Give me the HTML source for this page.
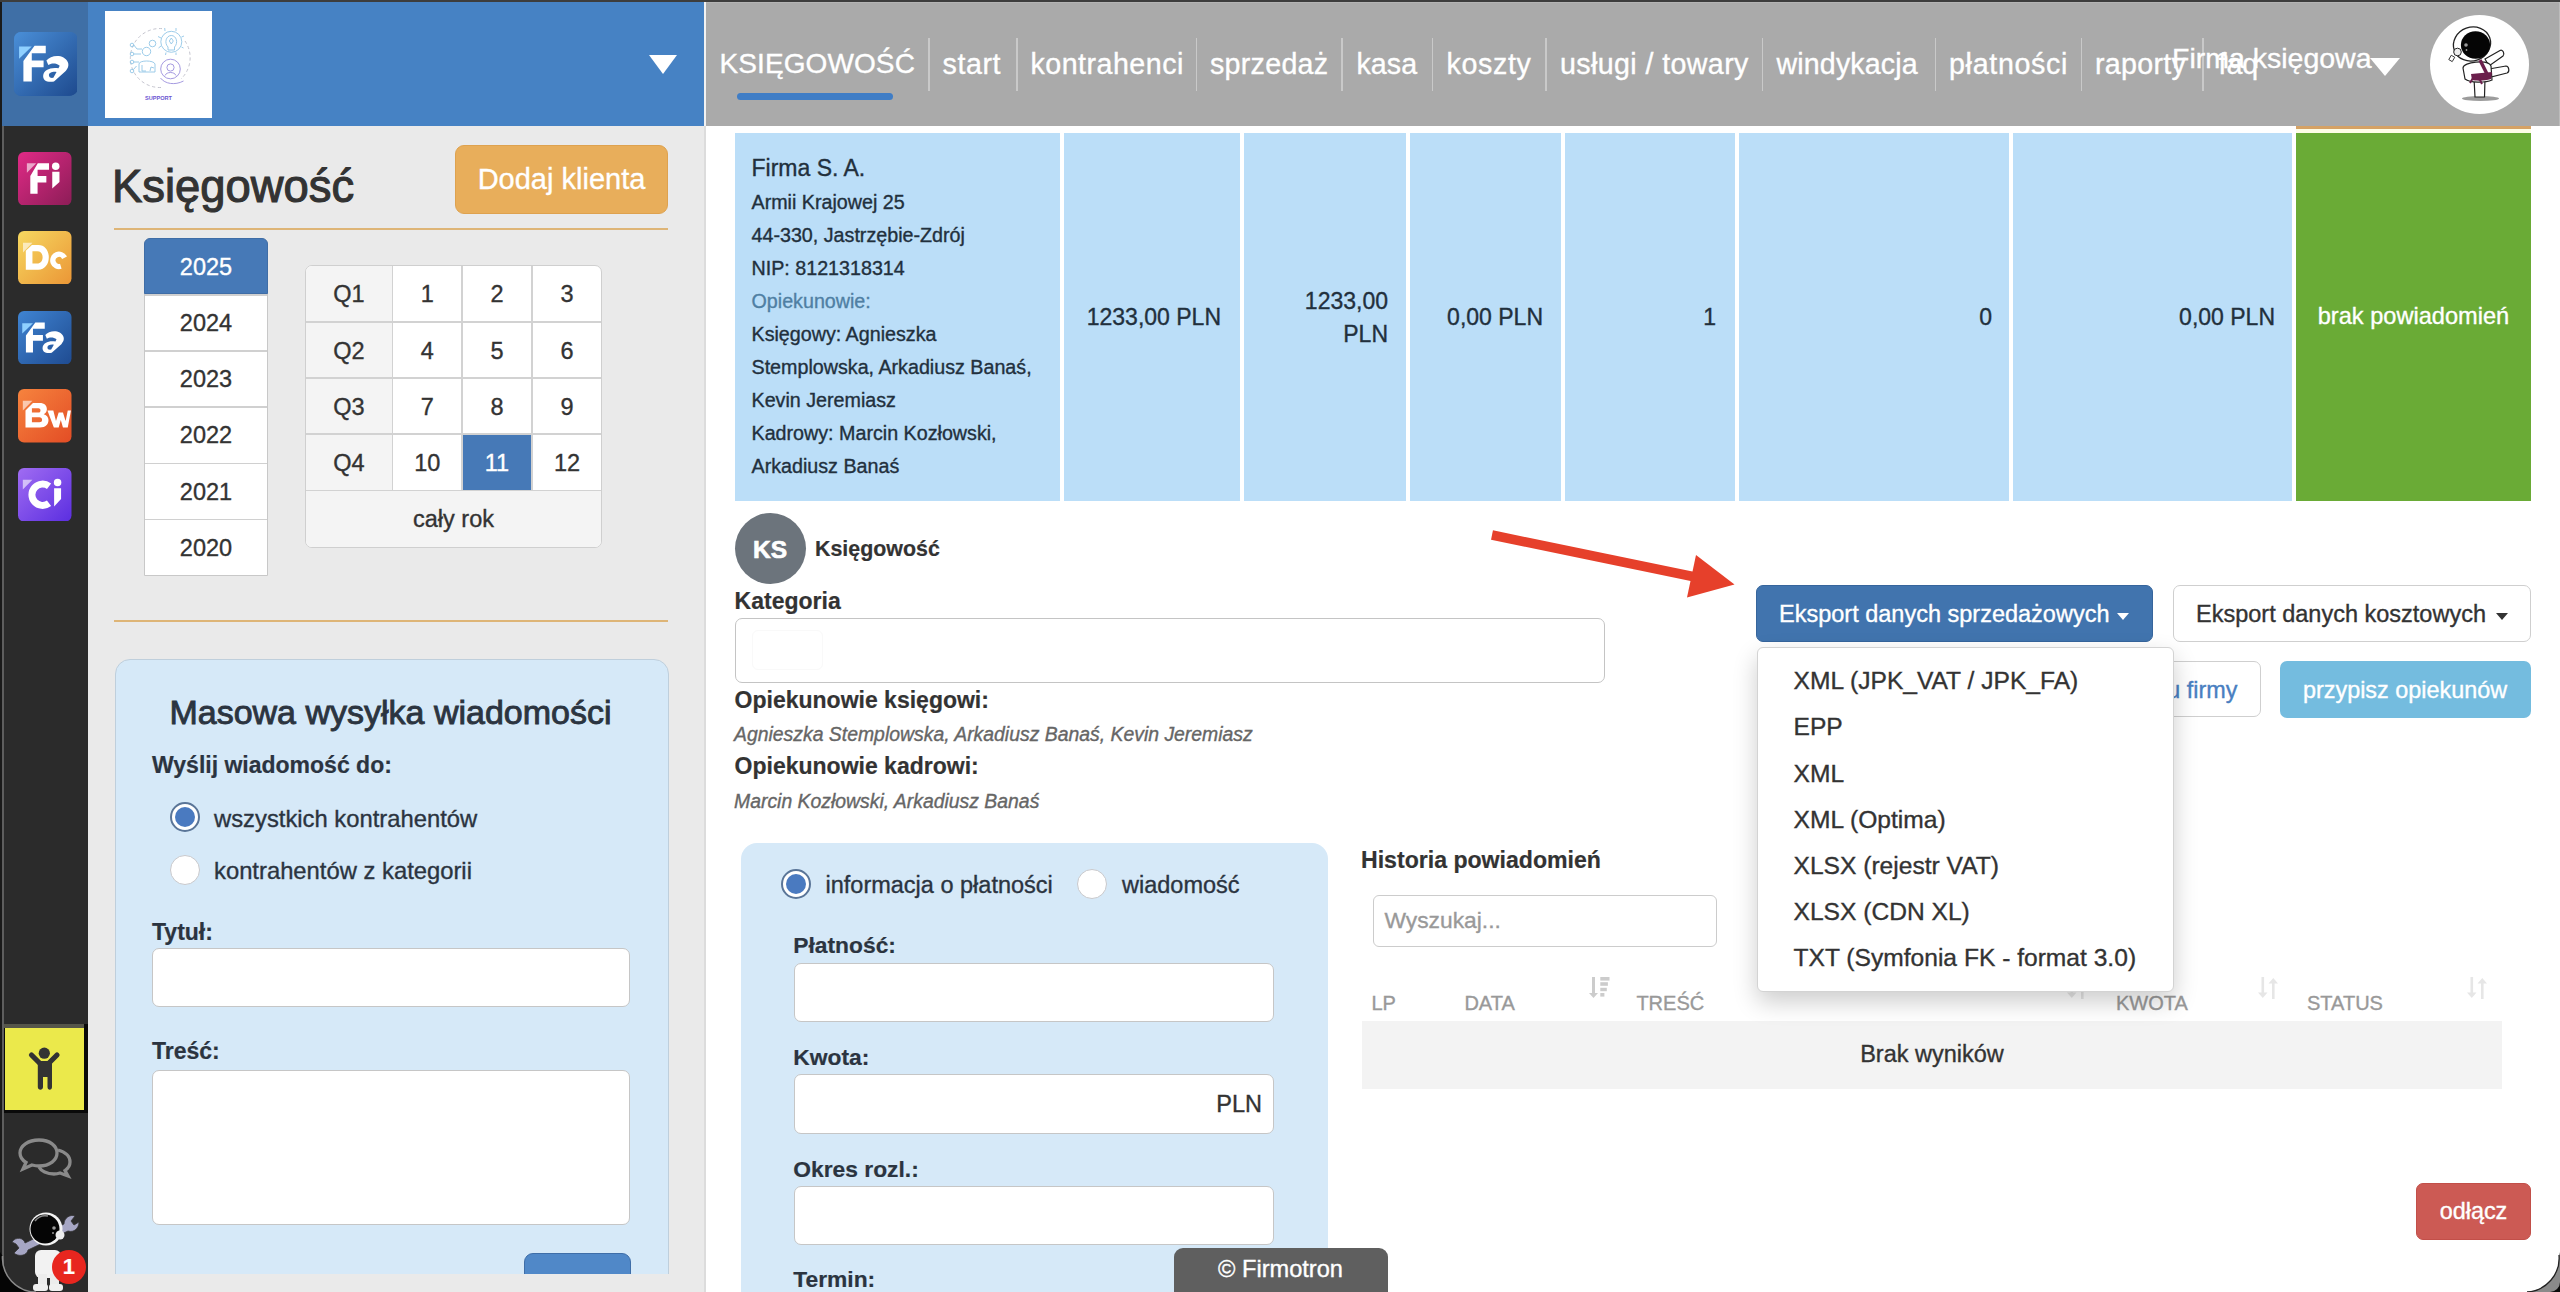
<!DOCTYPE html>
<html><head><meta charset="utf-8"><title>Firmotron</title>
<style>
*{box-sizing:border-box;margin:0;padding:0}
html,body{width:2560px;height:1292px;overflow:hidden;background:#fff;font-family:"Liberation Sans",sans-serif;position:relative}
.a{position:absolute}
.t{white-space:nowrap}
</style></head><body>

<div class="a" style="left:0px;top:0px;width:2560px;height:1292px;background:#fff"></div>
<div class="a" style="left:88px;top:126px;width:617px;height:1166px;background:#eaeaea"></div>
<div class="a" style="left:704px;top:126px;width:2px;height:1166px;background:#dcdcdc"></div>
<div class="a" style="left:0px;top:0px;width:88px;height:1292px;background:#2b2b2b"></div>
<div class="a" style="left:0px;top:0px;width:2px;height:1292px;background:#1a1a1a"></div>
<div class="a" style="left:2px;top:126px;width:1.5px;height:1166px;background:#5e5e5e"></div>
<div class="a" style="left:2px;top:2px;width:86px;height:124px;background:#3f6fa6"></div>
<div class="a" style="left:88px;top:2px;width:616px;height:124px;background:#4682c4"></div>
<div class="a" style="left:704px;top:2px;width:2px;height:124px;background:#f2f2f2"></div>
<div class="a" style="left:706px;top:2px;width:1852.5px;height:124px;background:#aaaaaa"></div>
<div class="a" style="left:706px;top:2px;width:1854px;height:1px;background:#b4b4b4"></div>
<div class="a" style="left:2558.5px;top:2px;width:1.5px;height:124px;background:#bcbcbc"></div>
<div class="a" style="left:0px;top:0px;width:2560px;height:2px;background:#3d3d3d"></div>
<div class="a" style="left:14px;top:32px;width:62px;height:64px;border-radius:7px;background:linear-gradient(135deg,#3f86d3,#1f4e94)"></div>
<div class="a" style="left:105px;top:11px;width:107px;height:107px;background:#fff"></div>
<div class="a" style="left:649px;top:55px;width:0;height:0;border-left:14px solid transparent;border-right:14px solid transparent;border-top:19px solid #fff"></div>
<div class="a t" style="left:719.5px;top:50.30px;font-size:28px;line-height:28px;color:#fff;font-weight:400;-webkit-text-stroke:0.35px #fff;letter-spacing:0.1px;">KSIĘGOWOŚĆ</div>
<div class="a" style="left:737px;top:92.5px;width:156px;height:7.5px;background:#3f7dc6;border-radius:4px"></div>
<div class="a" style="left:928px;top:37.5px;width:1.5px;height:53.0px;background:#c9c9c9"></div>
<div class="a" style="left:1016px;top:37.5px;width:1.5px;height:53.0px;background:#c9c9c9"></div>
<div class="a" style="left:1195.5px;top:37.5px;width:1.5px;height:53.0px;background:#c9c9c9"></div>
<div class="a" style="left:1341px;top:37.5px;width:1.5px;height:53.0px;background:#c9c9c9"></div>
<div class="a" style="left:1431.5px;top:37.5px;width:1.5px;height:53.0px;background:#c9c9c9"></div>
<div class="a" style="left:1545px;top:37.5px;width:1.5px;height:53.0px;background:#c9c9c9"></div>
<div class="a" style="left:1761.5px;top:37.5px;width:1.5px;height:53.0px;background:#c9c9c9"></div>
<div class="a" style="left:1934.5px;top:37.5px;width:1.5px;height:53.0px;background:#c9c9c9"></div>
<div class="a" style="left:2080.5px;top:37.5px;width:1.5px;height:53.0px;background:#c9c9c9"></div>
<div class="a" style="left:2202px;top:37.5px;width:1.5px;height:53.0px;background:#c9c9c9"></div>
<div class="a t" style="left:942.5px;top:49.79px;font-size:28.6px;line-height:28.6px;color:#fff;font-weight:400;-webkit-text-stroke:0.35px #fff;letter-spacing:0.6px;">start</div>
<div class="a t" style="left:1030.5px;top:49.79px;font-size:28.6px;line-height:28.6px;color:#fff;font-weight:400;-webkit-text-stroke:0.35px #fff;letter-spacing:0.5px;">kontrahenci</div>
<div class="a t" style="left:1210px;top:49.79px;font-size:28.6px;line-height:28.6px;color:#fff;font-weight:400;-webkit-text-stroke:0.35px #fff;letter-spacing:0.3px;">sprzedaż</div>
<div class="a t" style="left:1356.5px;top:49.79px;font-size:28.6px;line-height:28.6px;color:#fff;font-weight:400;-webkit-text-stroke:0.35px #fff;letter-spacing:0.05px;">kasa</div>
<div class="a t" style="left:1446.5px;top:49.79px;font-size:28.6px;line-height:28.6px;color:#fff;font-weight:400;-webkit-text-stroke:0.35px #fff;letter-spacing:0.65px;">koszty</div>
<div class="a t" style="left:1560px;top:49.79px;font-size:28.6px;line-height:28.6px;color:#fff;font-weight:400;-webkit-text-stroke:0.35px #fff;letter-spacing:0.4px;">usługi / towary</div>
<div class="a t" style="left:1776.5px;top:49.79px;font-size:28.6px;line-height:28.6px;color:#fff;font-weight:400;-webkit-text-stroke:0.35px #fff;letter-spacing:0.15px;">windykacja</div>
<div class="a t" style="left:1949px;top:49.79px;font-size:28.6px;line-height:28.6px;color:#fff;font-weight:400;-webkit-text-stroke:0.35px #fff;letter-spacing:0.7px;">płatności</div>
<div class="a t" style="left:2095px;top:49.79px;font-size:28.6px;line-height:28.6px;color:#fff;font-weight:400;-webkit-text-stroke:0.35px #fff;letter-spacing:0.3px;">raporty</div>
<div class="a t" style="left:2218.5px;top:49.79px;font-size:28.6px;line-height:28.6px;color:#fff;font-weight:400;-webkit-text-stroke:0.35px #fff;letter-spacing:0px;">faq</div>
<div class="a t" style="left:2172px;top:44.27px;font-size:28.5px;line-height:28.5px;color:#fff;font-weight:400;-webkit-text-stroke:0.35px #fff;">Firma księgowa</div>
<div class="a" style="left:2370px;top:57.5px;width:0;height:0;border-left:15px solid transparent;border-right:15px solid transparent;border-top:18px solid #fff"></div>
<div class="a" style="left:2430px;top:15px;width:99px;height:99px;border-radius:50%;background:#fff"></div>
<div class="a t" style="left:112px;top:163.57px;font-size:45.4px;line-height:45.4px;color:#333;font-weight:400;-webkit-text-stroke:1.1px #333;">Księgowość</div>
<div class="a" style="left:455px;top:145px;width:213px;height:69px;border-radius:9px;background:#e8ae5b;border:1px solid #dea24f"></div>
<div class="a t" style="left:-38.5px;width:1200px;text-align:center;top:165.45px;font-size:29px;line-height:29px;color:#fff;font-weight:400;-webkit-text-stroke:0.35px #fff;">Dodaj klienta</div>
<div class="a" style="left:114px;top:227.5px;width:554px;height:2.0px;background:#deb577"></div>
<div class="a" style="left:114px;top:620px;width:554px;height:2px;background:#deb577"></div>
<div class="a" style="left:144px;top:238px;width:124px;height:338px;background:#fff;border:1px solid #c8c8c8;border-radius:6px 6px 0 0"></div>
<div class="a" style="left:144px;top:238px;width:124px;height:56px;background:#4679b7;border:1px solid #3f6da6;border-radius:6px 6px 0 0"></div>
<div class="a" style="left:145px;top:294.0px;width:122px;height:1.5px;background:#d0d0d0"></div>
<div class="a" style="left:145px;top:350.2px;width:122px;height:1.5px;background:#d0d0d0"></div>
<div class="a" style="left:145px;top:406.40000000000003px;width:122px;height:1.5px;background:#d0d0d0"></div>
<div class="a" style="left:145px;top:462.59999999999997px;width:122px;height:1.5px;background:#d0d0d0"></div>
<div class="a" style="left:145px;top:518.8px;width:122px;height:1.5px;background:#d0d0d0"></div>
<div class="a t" style="left:-394px;width:1200px;text-align:center;top:256.11px;font-size:23.5px;line-height:23.5px;color:#fff;font-weight:400;-webkit-text-stroke:0.35px #fff;">2025</div>
<div class="a t" style="left:-394px;width:1200px;text-align:center;top:312.21px;font-size:23.5px;line-height:23.5px;color:#333;font-weight:400;-webkit-text-stroke:0.35px #333;">2024</div>
<div class="a t" style="left:-394px;width:1200px;text-align:center;top:368.31px;font-size:23.5px;line-height:23.5px;color:#333;font-weight:400;-webkit-text-stroke:0.35px #333;">2023</div>
<div class="a t" style="left:-394px;width:1200px;text-align:center;top:424.41px;font-size:23.5px;line-height:23.5px;color:#333;font-weight:400;-webkit-text-stroke:0.35px #333;">2022</div>
<div class="a t" style="left:-394px;width:1200px;text-align:center;top:480.51px;font-size:23.5px;line-height:23.5px;color:#333;font-weight:400;-webkit-text-stroke:0.35px #333;">2021</div>
<div class="a t" style="left:-394px;width:1200px;text-align:center;top:536.61px;font-size:23.5px;line-height:23.5px;color:#333;font-weight:400;-webkit-text-stroke:0.35px #333;">2020</div>
<div class="a" style="left:305px;top:265px;width:297px;height:283px;background:#fff;border:1.5px solid #cfcfcf;border-radius:7px;overflow:hidden"><div class="a" style="left:0;top:0;width:87px;height:225px;background:#f4f4f4"></div><div class="a" style="left:0;top:224px;width:297px;height:60px;background:#f4f4f4"></div><div class="a" style="left:156px;top:168px;width:70px;height:57px;background:#4679b7"></div></div>
<div class="a" style="left:306px;top:321.05px;width:295px;height:1.5px;background:#d2d2d2"></div>
<div class="a" style="left:306px;top:377.05px;width:295px;height:1.5px;background:#d2d2d2"></div>
<div class="a" style="left:306px;top:433.15px;width:295px;height:1.5px;background:#d2d2d2"></div>
<div class="a" style="left:306px;top:489.55px;width:295px;height:1.5px;background:#d2d2d2"></div>
<div class="a" style="left:391.85px;top:266px;width:1.5px;height:224.3px;background:#d2d2d2"></div>
<div class="a" style="left:461.25px;top:266px;width:1.5px;height:224.3px;background:#d2d2d2"></div>
<div class="a" style="left:531.25px;top:266px;width:1.5px;height:224.3px;background:#d2d2d2"></div>
<div class="a t" style="left:-251.2px;width:1200px;text-align:center;top:283.41px;font-size:23.5px;line-height:23.5px;color:#333;font-weight:400;-webkit-text-stroke:0.35px #333;">Q1</div>
<div class="a t" style="left:-172.7px;width:1200px;text-align:center;top:283.41px;font-size:23.5px;line-height:23.5px;color:#333;font-weight:400;-webkit-text-stroke:0.35px #333;">1</div>
<div class="a t" style="left:-103.0px;width:1200px;text-align:center;top:283.41px;font-size:23.5px;line-height:23.5px;color:#333;font-weight:400;-webkit-text-stroke:0.35px #333;">2</div>
<div class="a t" style="left:-33.0px;width:1200px;text-align:center;top:283.41px;font-size:23.5px;line-height:23.5px;color:#333;font-weight:400;-webkit-text-stroke:0.35px #333;">3</div>
<div class="a t" style="left:-251.2px;width:1200px;text-align:center;top:339.51px;font-size:23.5px;line-height:23.5px;color:#333;font-weight:400;-webkit-text-stroke:0.35px #333;">Q2</div>
<div class="a t" style="left:-172.7px;width:1200px;text-align:center;top:339.51px;font-size:23.5px;line-height:23.5px;color:#333;font-weight:400;-webkit-text-stroke:0.35px #333;">4</div>
<div class="a t" style="left:-103.0px;width:1200px;text-align:center;top:339.51px;font-size:23.5px;line-height:23.5px;color:#333;font-weight:400;-webkit-text-stroke:0.35px #333;">5</div>
<div class="a t" style="left:-33.0px;width:1200px;text-align:center;top:339.51px;font-size:23.5px;line-height:23.5px;color:#333;font-weight:400;-webkit-text-stroke:0.35px #333;">6</div>
<div class="a t" style="left:-251.2px;width:1200px;text-align:center;top:395.61px;font-size:23.5px;line-height:23.5px;color:#333;font-weight:400;-webkit-text-stroke:0.35px #333;">Q3</div>
<div class="a t" style="left:-172.7px;width:1200px;text-align:center;top:395.61px;font-size:23.5px;line-height:23.5px;color:#333;font-weight:400;-webkit-text-stroke:0.35px #333;">7</div>
<div class="a t" style="left:-103.0px;width:1200px;text-align:center;top:395.61px;font-size:23.5px;line-height:23.5px;color:#333;font-weight:400;-webkit-text-stroke:0.35px #333;">8</div>
<div class="a t" style="left:-33.0px;width:1200px;text-align:center;top:395.61px;font-size:23.5px;line-height:23.5px;color:#333;font-weight:400;-webkit-text-stroke:0.35px #333;">9</div>
<div class="a t" style="left:-251.2px;width:1200px;text-align:center;top:451.71px;font-size:23.5px;line-height:23.5px;color:#333;font-weight:400;-webkit-text-stroke:0.35px #333;">Q4</div>
<div class="a t" style="left:-172.7px;width:1200px;text-align:center;top:451.71px;font-size:23.5px;line-height:23.5px;color:#333;font-weight:400;-webkit-text-stroke:0.35px #333;">10</div>
<div class="a t" style="left:-103.0px;width:1200px;text-align:center;top:451.71px;font-size:23.5px;line-height:23.5px;color:#fff;font-weight:400;-webkit-text-stroke:0.35px #fff;">11</div>
<div class="a t" style="left:-33.0px;width:1200px;text-align:center;top:451.71px;font-size:23.5px;line-height:23.5px;color:#333;font-weight:400;-webkit-text-stroke:0.35px #333;">12</div>
<div class="a t" style="left:-146.5px;width:1200px;text-align:center;top:507.61px;font-size:23.5px;line-height:23.5px;color:#333;font-weight:400;-webkit-text-stroke:0.35px #333;">cały rok</div>
<div class="a" style="left:114.5px;top:658.5px;width:554px;height:700px;background:#d6e9f8;border:1.5px solid #bfcfdc;border-radius:15px"></div>
<div class="a t" style="left:-209.5px;width:1200px;text-align:center;top:695.22px;font-size:34px;line-height:34px;color:#2b3440;font-weight:400;-webkit-text-stroke:0.9px #2b3440;">Masowa wysyłka wiadomości</div>
<div class="a t" style="left:152px;top:754.23px;font-size:23px;line-height:23px;color:#2b3440;font-weight:700;-webkit-text-stroke:0.2px #2b3440;">Wyślij wiadomość do:</div>
<div class="a" style="left:169.5px;top:801.5px;width:30px;height:30px;border-radius:50%;background:#fff;border:2px solid #5a7598"></div>
<div class="a" style="left:174.5px;top:806.5px;width:20px;height:20px;border-radius:50%;background:#4a7ac0"></div>
<div class="a t" style="left:214px;top:806.55px;font-size:23.8px;line-height:23.8px;color:#2b3440;font-weight:400;-webkit-text-stroke:0.35px #2b3440;">wszystkich kontrahentów</div>
<div class="a" style="left:169.5px;top:855px;width:30px;height:30px;border-radius:50%;background:#fff;border:1.5px solid #c9c9cc"></div>
<div class="a t" style="left:214px;top:859.45px;font-size:23.8px;line-height:23.8px;color:#2b3440;font-weight:400;-webkit-text-stroke:0.35px #2b3440;">kontrahentów z kategorii</div>
<div class="a t" style="left:152px;top:920.53px;font-size:23px;line-height:23px;color:#2b3440;font-weight:700;-webkit-text-stroke:0.2px #2b3440;">Tytuł:</div>
<div class="a" style="left:152px;top:948px;width:478px;height:59px;background:#fff;border:1.5px solid #c6c6c6;border-radius:7px"></div>
<div class="a t" style="left:152px;top:1040.33px;font-size:23px;line-height:23px;color:#2b3440;font-weight:700;-webkit-text-stroke:0.2px #2b3440;">Treść:</div>
<div class="a" style="left:152px;top:1070px;width:478px;height:155px;background:#fff;border:1.5px solid #c6c6c6;border-radius:7px"></div>
<div class="a" style="left:524px;top:1253px;width:106.5px;height:60px;background:#5088c8;border:1.5px solid #3f6ea8;border-radius:9px"></div>
<div class="a" style="left:88px;top:1273.5px;width:616px;height:18.5px;background:#eaeaea"></div>
<div class="a" style="left:734.7px;top:133px;width:325.0999999999999px;height:367.5px;background:#bbdef8"></div>
<div class="a" style="left:1064.3px;top:133px;width:175.4000000000001px;height:367.5px;background:#bbdef8"></div>
<div class="a" style="left:1243.6px;top:133px;width:162.0px;height:367.5px;background:#bbdef8"></div>
<div class="a" style="left:1410px;top:133px;width:151px;height:367.5px;background:#bbdef8"></div>
<div class="a" style="left:1565px;top:133px;width:170px;height:367.5px;background:#bbdef8"></div>
<div class="a" style="left:1739px;top:133px;width:269.70000000000005px;height:367.5px;background:#bbdef8"></div>
<div class="a" style="left:2013px;top:133px;width:278.5999999999999px;height:367.5px;background:#bbdef8"></div>
<div class="a" style="left:2296px;top:133px;width:235px;height:367.5px;background:#6aab36"></div>
<div class="a" style="left:2296px;top:126px;width:235px;height:3px;background:#d5a265"></div>
<div class="a" style="left:2296px;top:129px;width:235px;height:3.5px;background:#fdfde6"></div>
<div class="a t" style="left:751.5px;top:156.83px;font-size:23px;line-height:23px;color:#22303d;font-weight:400;-webkit-text-stroke:0.35px #22303d;">Firma S. A.</div>
<div class="a t" style="left:751.5px;top:192.82px;font-size:19.7px;line-height:19.7px;color:#22303d;font-weight:400;-webkit-text-stroke:0.35px #22303d;">Armii Krajowej 25</div>
<div class="a t" style="left:751.5px;top:225.82px;font-size:19.7px;line-height:19.7px;color:#22303d;font-weight:400;-webkit-text-stroke:0.35px #22303d;">44-330, Jastrzębie-Zdrój</div>
<div class="a t" style="left:751.5px;top:258.82px;font-size:19.7px;line-height:19.7px;color:#22303d;font-weight:400;-webkit-text-stroke:0.35px #22303d;">NIP: 8121318314</div>
<div class="a t" style="left:751.5px;top:291.82px;font-size:19.7px;line-height:19.7px;color:#4f7fa3;font-weight:400;-webkit-text-stroke:0.35px #4f7fa3;">Opiekunowie:</div>
<div class="a t" style="left:751.5px;top:324.82px;font-size:19.7px;line-height:19.7px;color:#22303d;font-weight:400;-webkit-text-stroke:0.35px #22303d;">Księgowy: Agnieszka</div>
<div class="a t" style="left:751.5px;top:357.82px;font-size:19.7px;line-height:19.7px;color:#22303d;font-weight:400;-webkit-text-stroke:0.35px #22303d;">Stemplowska, Arkadiusz Banaś,</div>
<div class="a t" style="left:751.5px;top:390.82px;font-size:19.7px;line-height:19.7px;color:#22303d;font-weight:400;-webkit-text-stroke:0.35px #22303d;">Kevin Jeremiasz</div>
<div class="a t" style="left:751.5px;top:423.82px;font-size:19.7px;line-height:19.7px;color:#22303d;font-weight:400;-webkit-text-stroke:0.35px #22303d;">Kadrowy: Marcin Kozłowski,</div>
<div class="a t" style="left:751.5px;top:456.82px;font-size:19.7px;line-height:19.7px;color:#22303d;font-weight:400;-webkit-text-stroke:0.35px #22303d;">Arkadiusz Banaś</div>
<div class="a t" style="right:1339px;top:306.33px;font-size:23px;line-height:23px;color:#22303d;font-weight:400;-webkit-text-stroke:0.35px #22303d;">1233,00 PLN</div>
<div class="a t" style="right:1172px;top:289.53px;font-size:23px;line-height:23px;color:#22303d;font-weight:400;-webkit-text-stroke:0.35px #22303d;">1233,00</div>
<div class="a t" style="right:1172px;top:322.73px;font-size:23px;line-height:23px;color:#22303d;font-weight:400;-webkit-text-stroke:0.35px #22303d;">PLN</div>
<div class="a t" style="right:1017px;top:306.33px;font-size:23px;line-height:23px;color:#22303d;font-weight:400;-webkit-text-stroke:0.35px #22303d;">0,00 PLN</div>
<div class="a t" style="right:844px;top:306.33px;font-size:23px;line-height:23px;color:#22303d;font-weight:400;-webkit-text-stroke:0.35px #22303d;">1</div>
<div class="a t" style="right:568px;top:306.33px;font-size:23px;line-height:23px;color:#22303d;font-weight:400;-webkit-text-stroke:0.35px #22303d;">0</div>
<div class="a t" style="right:285px;top:306.33px;font-size:23px;line-height:23px;color:#22303d;font-weight:400;-webkit-text-stroke:0.35px #22303d;">0,00 PLN</div>
<div class="a t" style="left:1813.5px;width:1200px;text-align:center;top:305.02px;font-size:23.6px;line-height:23.6px;color:#fff;font-weight:400;-webkit-text-stroke:0.35px #fff;">brak powiadomień</div>
<div class="a" style="left:734.5px;top:513px;width:71px;height:71px;border-radius:50%;background:#6c747c"></div>
<div class="a t" style="left:170px;width:1200px;text-align:center;top:537.76px;font-size:24.5px;line-height:24.5px;color:#fff;font-weight:700;-webkit-text-stroke:0.7px #fff;">KS</div>
<div class="a t" style="left:815px;top:538.58px;font-size:21.4px;line-height:21.4px;color:#333;font-weight:700;-webkit-text-stroke:0.2px #333;">Księgowość</div>
<div class="a t" style="left:734.6px;top:589.83px;font-size:23px;line-height:23px;color:#333;font-weight:700;-webkit-text-stroke:0.2px #333;">Kategoria</div>
<div class="a" style="left:735px;top:618px;width:870px;height:65px;background:#fff;border:1.8px solid #c4c4c4;border-radius:7px"></div>
<div class="a" style="left:752px;top:630px;width:71px;height:40px;background:#fff;border:1px solid #f9f9f9;border-radius:6px"></div>
<div class="a t" style="left:734.6px;top:688.53px;font-size:23px;line-height:23px;color:#333;font-weight:700;-webkit-text-stroke:0.2px #333;">Opiekunowie księgowi:</div>
<div class="a t" style="left:734px;top:724.88px;font-size:19.4px;line-height:19.4px;color:#666;font-weight:400;-webkit-text-stroke:0.35px #666;font-style:italic;">Agnieszka Stemplowska, Arkadiusz Banaś, Kevin Jeremiasz</div>
<div class="a t" style="left:734.6px;top:755.03px;font-size:23px;line-height:23px;color:#333;font-weight:700;-webkit-text-stroke:0.2px #333;">Opiekunowie kadrowi:</div>
<div class="a t" style="left:734px;top:792.08px;font-size:19.4px;line-height:19.4px;color:#666;font-weight:400;-webkit-text-stroke:0.35px #666;font-style:italic;">Marcin Kozłowski, Arkadiusz Banaś</div>
<svg class="a" style="left:0;top:0" width="2560" height="1292"><line x1="1492" y1="535" x2="1700" y2="578" stroke="#e6402b" stroke-width="9.5" stroke-linecap="butt"/><polygon points="1734.5,584.5 1696,555 1687,597.5" fill="#e6402b"/></svg>
<div class="a" style="left:1756px;top:584.5px;width:397px;height:57.5px;background:#4174ae;border:1.5px solid #36659c;border-radius:7px"></div>
<div class="a t" style="left:1779px;top:603.11px;font-size:23.5px;line-height:23.5px;color:#fff;font-weight:400;-webkit-text-stroke:0.35px #fff;">Eksport danych sprzedażowych</div>
<div class="a" style="left:2117px;top:612.5px;width:0;height:0;border-left:6.5px solid transparent;border-right:6.5px solid transparent;border-top:7px solid #fff"></div>
<div class="a" style="left:2172.5px;top:584.5px;width:358.5px;height:57.5px;background:#fff;border:1.5px solid #cfcfcf;border-radius:7px"></div>
<div class="a t" style="left:2196px;top:603.11px;font-size:23.5px;line-height:23.5px;color:#333;font-weight:400;-webkit-text-stroke:0.35px #333;">Eksport danych kosztowych</div>
<div class="a" style="left:2496px;top:612.5px;width:0;height:0;border-left:6.5px solid transparent;border-right:6.5px solid transparent;border-top:7px solid #333"></div>
<div class="a" style="left:2100px;top:661px;width:160.5px;height:56px;background:#fff;border:1.5px solid #cfcfcf;border-radius:7px"></div>
<div class="a t" style="right:322.5px;top:679.49px;font-size:23.4px;line-height:23.4px;color:#4a7fc1;font-weight:400;-webkit-text-stroke:0.35px #4a7fc1;">u firmy</div>
<div class="a" style="left:2279.5px;top:660.5px;width:251.5px;height:57px;background:#74bcdf;border-radius:7px"></div>
<div class="a t" style="left:1805px;width:1200px;text-align:center;top:679.49px;font-size:23.4px;line-height:23.4px;color:#fff;font-weight:400;-webkit-text-stroke:0.35px #fff;">przypisz opiekunów</div>
<div class="a" style="left:740.5px;top:843px;width:587.5px;height:520px;background:#d6e9f8;border-radius:16px"></div>
<div class="a" style="left:781px;top:868.5px;width:30px;height:30px;border-radius:50%;background:#fff;border:2px solid #5a7598"></div>
<div class="a" style="left:786px;top:873.5px;width:20px;height:20px;border-radius:50%;background:#4a7ac0"></div>
<div class="a t" style="left:825.5px;top:874.41px;font-size:23.5px;line-height:23.5px;color:#2b3440;font-weight:400;-webkit-text-stroke:0.35px #2b3440;">informacja o płatności</div>
<div class="a" style="left:1077px;top:869px;width:30px;height:30px;border-radius:50%;background:#fff;border:1.5px solid #c9c9cc"></div>
<div class="a t" style="left:1122px;top:874.41px;font-size:23.5px;line-height:23.5px;color:#2b3440;font-weight:400;-webkit-text-stroke:0.35px #2b3440;">wiadomość</div>
<div class="a t" style="left:793.3px;top:934.00px;font-size:22.8px;line-height:22.8px;color:#2b3440;font-weight:700;-webkit-text-stroke:0.2px #2b3440;">Płatność:</div>
<div class="a" style="left:794px;top:962.5px;width:480px;height:59.5px;background:#fff;border:1.5px solid #c6c6c6;border-radius:7px"></div>
<div class="a t" style="left:793.3px;top:1045.60px;font-size:22.8px;line-height:22.8px;color:#2b3440;font-weight:700;-webkit-text-stroke:0.2px #2b3440;">Kwota:</div>
<div class="a" style="left:794px;top:1074px;width:480px;height:59.5px;background:#fff;border:1.5px solid #c6c6c6;border-radius:7px"></div>
<div class="a t" style="right:1298px;top:1092.51px;font-size:23.5px;line-height:23.5px;color:#333;font-weight:400;-webkit-text-stroke:0.35px #333;">PLN</div>
<div class="a t" style="left:793.3px;top:1157.50px;font-size:22.8px;line-height:22.8px;color:#2b3440;font-weight:700;-webkit-text-stroke:0.2px #2b3440;">Okres rozl.:</div>
<div class="a" style="left:794px;top:1185.5px;width:480px;height:59.5px;background:#fff;border:1.5px solid #c6c6c6;border-radius:7px"></div>
<div class="a t" style="left:793.3px;top:1268.30px;font-size:22.8px;line-height:22.8px;color:#2b3440;font-weight:700;-webkit-text-stroke:0.2px #2b3440;">Termin:</div>
<div class="a" style="left:1174px;top:1247.5px;width:214px;height:60px;background:#5f5f5f;border-radius:9px 9px 0 0"></div>
<div class="a t" style="left:680.5px;width:1200px;text-align:center;top:1258.02px;font-size:23.6px;line-height:23.6px;color:#fff;font-weight:400;-webkit-text-stroke:0.35px #fff;">© Firmotron</div>
<div class="a t" style="left:1361px;top:848.75px;font-size:23.1px;line-height:23.1px;color:#333;font-weight:700;-webkit-text-stroke:0.2px #333;">Historia powiadomień</div>
<div class="a" style="left:1372.5px;top:895px;width:344.5px;height:51.5px;background:#fff;border:1.5px solid #cccccc;border-radius:6px"></div>
<div class="a t" style="left:1384.5px;top:908.90px;font-size:22.8px;line-height:22.8px;color:#999;font-weight:400;-webkit-text-stroke:0.35px #999;">Wyszukaj...</div>
<div class="a t" style="left:1371.4px;top:993.07px;font-size:20px;line-height:20px;color:#999;font-weight:400;-webkit-text-stroke:0.35px #999;">LP</div>
<div class="a t" style="left:1464.4px;top:993.07px;font-size:20px;line-height:20px;color:#999;font-weight:400;-webkit-text-stroke:0.35px #999;">DATA</div>
<div class="a t" style="left:1636.4px;top:993.07px;font-size:20px;line-height:20px;color:#999;font-weight:400;-webkit-text-stroke:0.35px #999;">TREŚĆ</div>
<div class="a t" style="left:2116px;top:993.07px;font-size:20px;line-height:20px;color:#999;font-weight:400;-webkit-text-stroke:0.35px #999;">KWOTA</div>
<div class="a t" style="left:2307px;top:993.07px;font-size:20px;line-height:20px;color:#999;font-weight:400;-webkit-text-stroke:0.35px #999;">STATUS</div>
<div class="a" style="left:1362px;top:1021px;width:1140px;height:67.5px;background:#f3f3f3"></div>
<div class="a t" style="left:1332px;width:1200px;text-align:center;top:1043.11px;font-size:23.5px;line-height:23.5px;color:#333;font-weight:400;-webkit-text-stroke:0.35px #333;">Brak wyników</div>
<div class="a" style="left:2416px;top:1182.5px;width:115px;height:57px;background:#cc5a54;border:1.5px solid #c24f49;border-radius:7px"></div>
<div class="a t" style="left:1873.5px;width:1200px;text-align:center;top:1199.59px;font-size:23.4px;line-height:23.4px;color:#fff;font-weight:400;-webkit-text-stroke:0.35px #fff;">odłącz</div>
<svg class="a" style="left:13.6px;top:32.2px" width="63.5" height="63.5" viewBox="0 0 100 100"><defs><linearGradient id="g32" x1="0" y1="0" x2="1" y2="1"><stop offset="0" stop-color="#4a8fd8"/><stop offset="1" stop-color="#1e4a8e"/></linearGradient></defs><rect x="0" y="0" width="100" height="100" rx="11.0" fill="url(#g32)"/><polygon points="8,23 28,23 8,42" fill="#8fd0ff"/><polygon points="32.4,21.6 50,21.6 50,33.4 28,33.4 28,44.7 46.6,44.7 46.6,55.6 28,55.6 28,77.8 14.8,77.8 14.8,45.6" fill="#fff"/><path fill-rule="evenodd" fill="#fff" d="M51,45 C58,36 79,34 85,48 C87,54 84,58 81,62 L63,78 C52,80 45,76 46,68 C47,60 57,55 70,57 L72,53 C66,48 58,49 54,52 Z M55,68 C55,64 61,62 67,63 L62,72 C58,73 55,71 55,68 Z"/></svg>
<svg class="a" style="left:18px;top:151.5px" width="53.5" height="53.5" viewBox="0 0 100 100"><defs><linearGradient id="g151" x1="0" y1="0" x2="1" y2="1"><stop offset="0" stop-color="#e02a86"/><stop offset="1" stop-color="#8c1d57"/></linearGradient></defs><rect x="0" y="0" width="100" height="100" rx="11.2" fill="url(#g151)"/><polygon points="16.6,21 34,21 16.6,38.8" fill="#fff" fill-opacity="0.6"/><polygon points="37,21 58,21 58,33 36.6,33 36.6,45 53,45 53,57 36.6,57 36.6,78 23,78 23,45" fill="#fff"/><circle cx="70.5" cy="26.5" r="7" fill="#fff"/><polygon points="64,37 77.5,37 77.5,56 64,68" fill="#fff"/></svg>
<svg class="a" style="left:18px;top:230.8px" width="53.5" height="53.5" viewBox="0 0 100 100"><defs><linearGradient id="g230" x1="0" y1="0" x2="1" y2="1"><stop offset="0" stop-color="#f6d860"/><stop offset="1" stop-color="#eb9636"/></linearGradient></defs><rect x="0" y="0" width="100" height="100" rx="11.2" fill="url(#g230)"/><polygon points="9.3,22 27,22 9.3,40" fill="#fff" fill-opacity="0.6"/><path fill-rule="evenodd" fill="#fff" d="M14.6,37 L26,26 L38,26 C50,26 57.6,36 57.6,49 C57.6,62 50,72.3 38,72.3 L14.6,72.3 Z M27,37.8 L36,37.8 C42,37.8 46,42 46,49 C46,56 42,60.8 36,60.8 L27,60.8 Z"/><path d="M87,50 A11.5,11.5 0 1 0 80,66" stroke="#fff" stroke-width="10" fill="none"/></svg>
<svg class="a" style="left:18px;top:310.6px" width="53.5" height="53.5" viewBox="0 0 100 100"><defs><linearGradient id="g310" x1="0" y1="0" x2="1" y2="1"><stop offset="0" stop-color="#3f84d2"/><stop offset="1" stop-color="#1f4b91"/></linearGradient></defs><rect x="0" y="0" width="100" height="100" rx="11.2" fill="url(#g310)"/><polygon points="8,23 28,23 8,42" fill="#8fd0ff"/><polygon points="32.4,21.6 50,21.6 50,33.4 28,33.4 28,44.7 46.6,44.7 46.6,55.6 28,55.6 28,77.8 14.8,77.8 14.8,45.6" fill="#fff"/><path fill-rule="evenodd" fill="#fff" d="M51,45 C58,36 79,34 85,48 C87,54 84,58 81,62 L63,78 C52,80 45,76 46,68 C47,60 57,55 70,57 L72,53 C66,48 58,49 54,52 Z M55,68 C55,64 61,62 67,63 L62,72 C58,73 55,71 55,68 Z"/></svg>
<svg class="a" style="left:18px;top:389px" width="53.5" height="53.5" viewBox="0 0 100 100"><defs><linearGradient id="g389" x1="0" y1="0" x2="1" y2="1"><stop offset="0" stop-color="#f6833e"/><stop offset="1" stop-color="#e34d25"/></linearGradient></defs><rect x="0" y="0" width="100" height="100" rx="11.2" fill="url(#g389)"/><polygon points="9,22 27,22 9,40" fill="#fff" fill-opacity="0.6"/><path fill-rule="evenodd" fill="#fff" d="M14,40 L28,26 L40,26 C50,26 54,31 54,38 C54,43 51,46 48,47 C53,48 57,52 57,58 C57,66 52,72 41,72 L14,72 Z M26,36 L38,36 C41,36 42,38 42,40 C42,43 40,44 38,44 L26,44 Z M26,53 L40,53 C43,53 45,55 45,58 C45,61 43,62 40,62 L26,62 Z"/><polygon points="55,40 66,40 71,60 76,44 84,44 89,60 93,40 99,40 93,72 84,72 80,58 76,72 67,72" fill="#fff"/></svg>
<svg class="a" style="left:18px;top:467.6px" width="53.5" height="53.5" viewBox="0 0 100 100"><defs><linearGradient id="g467" x1="0" y1="0" x2="1" y2="1"><stop offset="0" stop-color="#a06cf2"/><stop offset="1" stop-color="#5b2ee0"/></linearGradient></defs><rect x="0" y="0" width="100" height="100" rx="11.2" fill="url(#g467)"/><polygon points="9,22 27,22 9,40" fill="#fff" fill-opacity="0.6"/><path d="M58,34 A20,20 0 1 0 58,66" stroke="#fff" stroke-width="13" fill="none"/><circle cx="74" cy="27" r="7" fill="#fff"/><polygon points="67.5,38 80.5,38 80.5,58 67.5,72" fill="#fff"/></svg>
<div class="a" style="left:4px;top:1024.3px;width:83.5px;height:89px;background:#0a0a0a"></div>
<div class="a" style="left:4px;top:1024.3px;width:80px;height:3.7px;background:#56564a"></div>
<div class="a" style="left:5.3px;top:1028px;width:78.8px;height:81.7px;background:#ebe94b"></div>
<svg class="a" style="left:27px;top:1046px" width="36" height="46" viewBox="0 0 36 46"><circle cx="17.3" cy="7.2" r="5.6" fill="#333"/><path d="M4.5,9 L13,17.5 L21.5,17.5 L30,9" stroke="#333" stroke-width="5.2" stroke-linecap="round" stroke-linejoin="round" fill="none"/><path d="M10.8,15.5 L25,15.5 L25,41 C25,44.5 20.5,44.5 20.5,41 L20.5,31 L16,31 L16,41 C16,44.5 10.8,44.5 10.8,41 Z" fill="#333"/></svg>
<svg class="a" style="left:17px;top:1136px" width="56" height="44" viewBox="0 0 56 44"><path d="M22,4 C33,4 40,10 40,17 C40,24 33,30 22,30 C19,30 17,29.5 15,29 L6,33 L9,26.5 C5,24 3,21 3,17 C3,10 11,4 22,4 Z" stroke="#8a8a8a" stroke-width="3.3" fill="none"/><path d="M41,14 C48,16 53,20 53,26 C53,29.5 51,32.5 48,34.5 L51,40 L43,37 C41.5,37.5 39.5,38 37,38 C30,38 24,35 22,31" stroke="#8a8a8a" stroke-width="3.3" fill="none"/></svg>
<svg class="a" style="left:8px;top:1210px" width="72" height="82" viewBox="0 0 72 82"><path d="M4,32 C8,26 16,28 17,33 L56,14 C56,8 62,4 67,6 L63,11 L66,15 L71,12 C71,18 66,23 60,21 L20,40 C19,46 10,47 6,43 L11,38 L8,34 Z" fill="#a6a6c4" stroke="#333" stroke-width="0.8"/><rect x="27" y="40" width="26" height="28" rx="6" fill="#f2f2f2"/><rect x="30" y="64" width="9" height="14" fill="#ececec"/><rect x="42" y="64" width="9" height="14" fill="#ececec"/><rect x="25" y="74" width="15" height="7" rx="3" fill="#f0f0f0"/><rect x="41" y="74" width="14" height="7" rx="3" fill="#f0f0f0"/><circle cx="38" cy="19" r="16.5" fill="#f4f4f4"/><circle cx="37" cy="19" r="14.5" fill="#050505"/><circle cx="46" cy="18" r="1.8" fill="#999"/><circle cx="45" cy="23" r="1" fill="#999"/><path d="M27,11 A13,13 0 0 1 40,6" stroke="#888" stroke-width="1.5" fill="none"/><circle cx="52" cy="25" r="4.5" fill="#eee"/></svg>
<div class="a" style="left:51.5px;top:1249.5px;width:34.5px;height:34.5px;border-radius:50%;background:#e8261f"></div>
<div class="a t" style="left:-531.2px;width:1200px;text-align:center;top:1255.88px;font-size:22px;line-height:22px;color:#fff;font-weight:700;-webkit-text-stroke:0.2px #fff;">1</div>
<svg class="a" style="left:0;top:1252px" width="40" height="40" viewBox="0 0 40 40"><path d="M0,0 L2.5,4 A34,34 0 0 0 36,40 L0,40 Z" fill="#050505"/><path d="M2.5,4 A34,34 0 0 0 36,40" stroke="#8a8a8a" stroke-width="1.5" fill="none"/></svg>
<svg class="a" style="left:2520px;top:1252px" width="40" height="40" viewBox="0 0 40 40"><path d="M40,0 L39,3 A34,34 0 0 1 7,40 L40,40 Z" fill="#8a8a8a"/><path d="M40,30 A10,10 0 0 1 30,40 L40,40 Z" fill="#0b0b0b"/><path d="M39,3 A34,34 0 0 1 7,40" stroke="#222" stroke-width="1.3" fill="none"/></svg>
<svg class="a" style="left:105px;top:11px" width="107" height="107" viewBox="0 0 107 107"><path d="M56,76.5 A29.5,29.5 0 1 1 57,17.6" stroke="#bdbdc8" stroke-width="0.9" stroke-dasharray="3.2 2.6" fill="none"/><path d="M80,30 A29.5,29.5 0 0 1 76,68" stroke="#bdbdc8" stroke-width="0.9" stroke-dasharray="3.2 2.6" fill="none"/><g stroke="#92c6e6" stroke-width="0.9" fill="none"><circle cx="27" cy="34" r="1.8"/><circle cx="27" cy="43" r="1.8"/><circle cx="27" cy="51" r="1.8"/><circle cx="27" cy="60" r="1.8"/><path d="M28.8,34 L32,38 L37,38 M28.8,43 L36,43 M28.8,51 L34,51 M28.5,58.5 L31.5,55"/><circle cx="41.5" cy="40.5" r="4.2"/><path d="M34,61 L34,53 C34,49 49,49 50,53 L50,61 Z M37,54 L37,60 L41,60 M45,60 L46,56 L49,57"/><circle cx="47.5" cy="32.5" r="3.3"/><circle cx="66.3" cy="30.8" r="10.5"/><path d="M60,20 L59.7,17 M71,20 L71,17 M76.5,26 L79,25 M76.5,36 L78.5,37 M71,41.5 L71,44 M61,41.5 L60.5,44 M56,27 L53,25.5 M56,35 L53.5,37"/><path d="M63,36 C59,32 61,24.5 66.3,24.5 C71.5,24.5 73.5,32 69.5,36 L69.5,39 L63,39 Z M66.3,27 L68.3,30 L66.3,33 L64.3,30 Z"/></g><g stroke="#9b8fdd" stroke-width="0.9" fill="none"><circle cx="65.5" cy="58" r="9.8"/><circle cx="65.5" cy="56.5" r="3.6"/><path d="M60,64.5 C61.5,60.5 69.5,60.5 71,64.5"/><path d="M55.5,67 C60,73 70,74.5 78.5,70"/></g><text x="53.5" y="88.8" font-family="Liberation Sans" font-size="5.6" font-weight="700" fill="#6d55d2" text-anchor="middle">SUPPORT</text></svg>
<svg class="a" style="left:2430px;top:14px" width="100" height="100" viewBox="0 0 100 100"><ellipse cx="50.5" cy="84.5" rx="18.5" ry="2.6" fill="#9c9c9c"/><path d="M55,45 L70,36.5 C73,35 75,40 73,42 L59,52 Z" fill="#fff" stroke="#222" stroke-width="1.2"/><path d="M59,55 L76,52 C79,52 80,58 77,59 L61,63 Z" fill="#fff" stroke="#222" stroke-width="1.2"/><path d="M44,64 L55,64 L54.5,83 L45,83 Z" fill="#fff" stroke="#222" stroke-width="1.2"/><path d="M33,54 C33,48 58,45 61,52 L62,66 C55,69 40,69 35,65 Z" fill="#fff" stroke="#222" stroke-width="1.2"/><path d="M41,60 L62,58 L61,65 C55,67 46,67 42,66 Z" fill="#6b1f4c"/><path d="M50,46 L57,60" stroke="#6b1f4c" stroke-width="3.5"/><path d="M43,64 L40,69 M49,64 L52,70" stroke="#6b1f4c" stroke-width="2"/><ellipse cx="42" cy="30" rx="18.8" ry="16.8" transform="rotate(-20 42 30)" fill="#fff" stroke="#222" stroke-width="1.3"/><ellipse cx="45.5" cy="31" rx="14.6" ry="13.8" fill="#050505"/><circle cx="36" cy="31" r="1.8" fill="#999"/><circle cx="36.5" cy="36" r="0.9" fill="#999"/><circle cx="27.5" cy="38" r="3.8" fill="#eee" stroke="#222" stroke-width="1"/><rect x="20" y="42" width="4" height="5" fill="#fff" stroke="#222" stroke-width="0.8" transform="rotate(30 22 44)"/></svg>
<svg class="a" style="left:1589px;top:976.5px" width="22" height="22" viewBox="0 0 22 22"><rect x="3" y="0" width="3" height="17" fill="#cccccc"/><polygon points="0,16 9,16 4.5,21" fill="#cccccc"/><rect x="11.3" y="0" width="9.2" height="3.6" fill="#cccccc"/><rect x="11.3" y="5.2" width="7.6" height="3.6" fill="#cccccc"/><rect x="11.3" y="10.8" width="6.5" height="3.4" fill="#cccccc"/><rect x="11.3" y="16" width="4.1" height="3.6" fill="#cccccc"/></svg>
<svg class="a" style="left:2067px;top:976.5px" width="22" height="22" viewBox="0 0 22 22"><rect x="3.5" y="0" width="2.6" height="17" fill="#e6e6e6"/><polygon points="0,15.5 9.5,15.5 4.8,21" fill="#e6e6e6"/><rect x="14" y="5" width="2.6" height="17" fill="#e6e6e6"/><polygon points="10.5,6.5 20,6.5 15.3,1" fill="#e6e6e6"/></svg>
<svg class="a" style="left:2258px;top:976.5px" width="22" height="22" viewBox="0 0 22 22"><rect x="3.5" y="0" width="2.6" height="17" fill="#e6e6e6"/><polygon points="0,15.5 9.5,15.5 4.8,21" fill="#e6e6e6"/><rect x="14" y="5" width="2.6" height="17" fill="#e6e6e6"/><polygon points="10.5,6.5 20,6.5 15.3,1" fill="#e6e6e6"/></svg>
<svg class="a" style="left:2467px;top:976.5px" width="22" height="22" viewBox="0 0 22 22"><rect x="3.5" y="0" width="2.6" height="17" fill="#e6e6e6"/><polygon points="0,15.5 9.5,15.5 4.8,21" fill="#e6e6e6"/><rect x="14" y="5" width="2.6" height="17" fill="#e6e6e6"/><polygon points="10.5,6.5 20,6.5 15.3,1" fill="#e6e6e6"/></svg>
<div class="a" style="left:1757px;top:647px;width:417px;height:344.5px;background:#fff;border:1.5px solid #d3d3d3;border-radius:6px;box-shadow:0 10px 24px rgba(0,0,0,0.2)"></div>
<div class="a t" style="left:1793.5px;top:669.18px;font-size:24.6px;line-height:24.6px;color:#333;font-weight:400;-webkit-text-stroke:0.35px #333;">XML (JPK_VAT / JPK_FA)</div>
<div class="a t" style="left:1793.5px;top:715.38px;font-size:24.6px;line-height:24.6px;color:#333;font-weight:400;-webkit-text-stroke:0.35px #333;">EPP</div>
<div class="a t" style="left:1793.5px;top:761.58px;font-size:24.6px;line-height:24.6px;color:#333;font-weight:400;-webkit-text-stroke:0.35px #333;">XML</div>
<div class="a t" style="left:1793.5px;top:807.78px;font-size:24.6px;line-height:24.6px;color:#333;font-weight:400;-webkit-text-stroke:0.35px #333;">XML (Optima)</div>
<div class="a t" style="left:1793.5px;top:853.98px;font-size:24.6px;line-height:24.6px;color:#333;font-weight:400;-webkit-text-stroke:0.35px #333;">XLSX (rejestr VAT)</div>
<div class="a t" style="left:1793.5px;top:900.18px;font-size:24.6px;line-height:24.6px;color:#333;font-weight:400;-webkit-text-stroke:0.35px #333;">XLSX (CDN XL)</div>
<div class="a t" style="left:1793.5px;top:946.38px;font-size:24.6px;line-height:24.6px;color:#333;font-weight:400;-webkit-text-stroke:0.35px #333;">TXT (Symfonia FK - format 3.0)</div>
</body></html>
